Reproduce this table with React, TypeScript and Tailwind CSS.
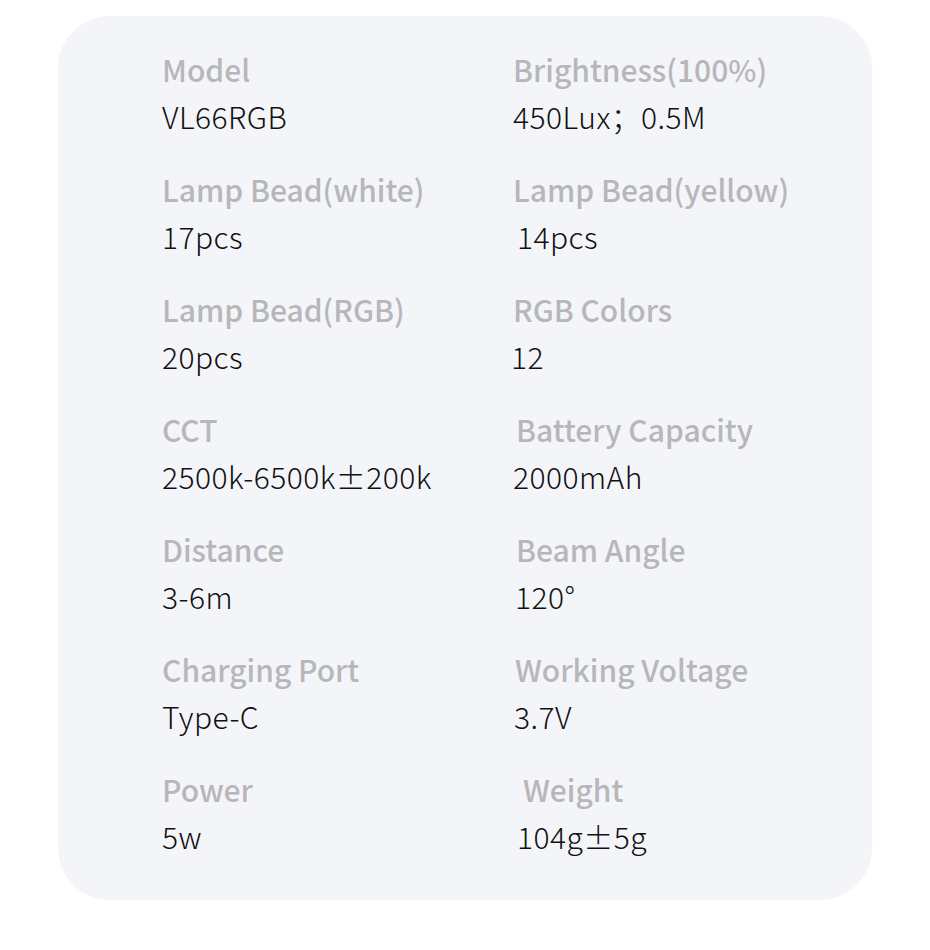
import React from "react";

const rows: [string, string, string, string, number, number][] = [
  ["Model", "VL66RGB", "Brightness(100%)", "450Lux；0.5M", 0, 0],
  ["Lamp Bead(white)", "17pcs", "Lamp Bead(yellow)", "14pcs", 0, 4],
  ["Lamp Bead(RGB)", "20pcs", "RGB Colors", "12", 0, -2],
  ["CCT", "2500k-6500k±200k", "Battery Capacity", "2000mAh", 3, 0],
  ["Distance", "3-6m", "Beam Angle", "120°", 3, 2],
  ["Charging Port", "Type-C", "Working Voltage", "3.7V", 2, 1],
  ["Power", "5w", "Weight", "104g±5g", 10, 4],
];

function Cell({ label, value, lOff = 0, vOff = 0 }: { label: string; value: string; lOff?: number; vOff?: number }) {
  return (
    <div className="flex flex-col">
      <div className="text-[30px] leading-[40px] font-medium text-[#b7b7b9] whitespace-nowrap" style={{ marginLeft: lOff }}>
        {label}
      </div>
      <div className="mt-[7px] text-[30px] leading-[40px] font-light tracking-[0.45px] text-[#111111] whitespace-nowrap" style={{ marginLeft: vOff }}>
        {value}
      </div>
    </div>
  );
}

export default function App() {
  return (
    <div
      className="w-[930px] h-[950px] bg-white pt-[16px] pl-[58px]"
      style={{ fontFamily: '"Noto Sans CJK SC", "Noto Sans", sans-serif' }}
    >
      <div className="w-[814px] h-[884px] rounded-[52px] bg-[#f4f5f9] pt-[33px] pl-[104px]">
        <div className="flex flex-col gap-[33px]">
          {rows.map(([l1, v1, l2, v2, lo, vo]) => (
            <div key={l1} className="grid grid-cols-[351px_1fr]">
              <Cell label={l1} value={v1} />
              <Cell label={l2} value={v2} lOff={lo} vOff={vo} />
            </div>
          ))}
        </div>
      </div>
    </div>
  );
}
